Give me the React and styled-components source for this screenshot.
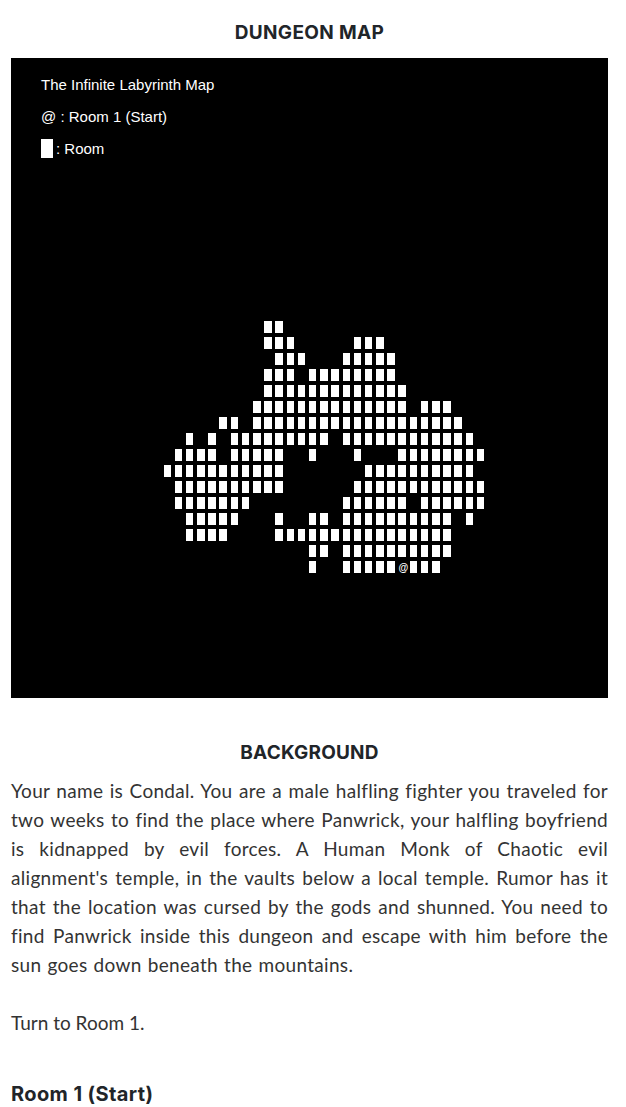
import React from "react"
import styled, { createGlobalStyle } from 'styled-components';

const GlobalStyle = createGlobalStyle`
  html, body {
    margin: 0;
    padding: 0;
    background: #fff;
  }
`

// rooms per row of the map, as [from, to] columns
const MAP_ROWS = [
  [[9, 10]],
  [[9, 11], [17, 19]],
  [[10, 12], [16, 20]],
  [[9, 11], [13, 20]],
  [[9, 21]],
  [[8, 21], [23, 25]],
  [[5, 6], [8, 26]],
  [[2, 2], [4, 4], [6, 14], [16, 27]],
  [[1, 4], [6, 10], [13, 13], [17, 17], [21, 28]],
  [[0, 10], [18, 27]],
  [[1, 10], [17, 28]],
  [[1, 7], [16, 21], [23, 28]],
  [[2, 6], [10, 10], [13, 14], [16, 25], [27, 27]],
  [[2, 5], [10, 25]],
  [[13, 14], [16, 25]],
  [[13, 13], [16, 24]],
]

const COLUMNS = 29
const START = { row: 15, col: 21 }

const Page = styled.div`
  width: 626px;
  height: 1107px;
  overflow: hidden;
  padding: 21px 18px 0 11px;
  box-sizing: border-box;
  color: #212529;
  font-family: Lato, "Open Sans", sans-serif;
`

const Heading = styled.h2`
  margin: 0 0 14px;
  font-family: Inter, "Liberation Sans", sans-serif;
  font-size: 19px;
  line-height: 23px;
  font-weight: 700;
  letter-spacing: 0.35px;
  text-align: center;
`

const MapPanel = styled.div`
  height: 640px;
  background: #000;
  color: #fff;
  font-family: "Liberation Sans", Arial, sans-serif;
  font-size: 15px;
  display: flex;
  flex-direction: column;
  padding: 10px 0 0 30px;
  box-sizing: border-box;
`

const Legend = styled.div`
  display: flex;
  align-items: center;
  height: 32px;
`

const LegendSwatch = styled.span`
  display: inline-block;
  width: 12px;
  height: 19px;
  background: #fff;
  margin-right: 3px;
`

const Grid = styled.div`
  display: grid;
  grid-template-columns: repeat(${COLUMNS}, 11.2px);
  grid-auto-rows: 16px;
  margin: 156px 0 0 122.5px;
`

const Cell = styled.div`
  width: 7.5px;
  height: 12.5px;
  margin: 0.5px 0 0;
  background: ${props => props.$room ? '#fff' : 'transparent'};
`

const StartCell = styled.div`
  width: 11px;
  height: 12.5px;
  margin: 0.5px 0 0 -0.5px;
  color: #fff;
  font-size: 10px;
  font-weight: 700;
  line-height: 13px;
  text-align: center;
`

const SectionTitle = styled.h3`
  margin: 43px 0 12px;
  font-family: Inter, "Liberation Sans", sans-serif;
  font-size: 19px;
  line-height: 23px;
  font-weight: 700;
  letter-spacing: 0.2px;
  text-align: center;
`

const Paragraph = styled.p`
  margin: 0 0 29px;
  font-size: 19px;
  line-height: 29px;
  letter-spacing: ${props => props.$long ? '0.3px' : '0'};
  word-spacing: ${props => props.$long ? '1px' : '0'};
  text-align: justify;
  color: #333;
`

const RoomTitle = styled.h3`
  margin: 46px 0 0;
  font-family: Inter, "Liberation Sans", sans-serif;
  font-size: 20px;
  line-height: 23px;
  font-weight: 700;
  letter-spacing: 0.4px;
`

const isRoom = (row, col) => MAP_ROWS[row].some(([from, to]) => col >= from && col <= to)

const DungeonMap = () => (
  <MapPanel>
    <Legend>The Infinite Labyrinth Map</Legend>
    <Legend>@ : Room 1 (Start)</Legend>
    <Legend><LegendSwatch />: Room</Legend>
    <Grid>
      {
        MAP_ROWS.map((_, row) =>
          Array.from({ length: COLUMNS }, (__, col) =>
            row === START.row && col === START.col
              ? <StartCell key={`room-${row}-${col}`}>@</StartCell>
              : <Cell key={`room-${row}-${col}`} $room={isRoom(row, col)} />
          )
        )
      }
    </Grid>
  </MapPanel>
)

const App = () => (
  <Page>
    <GlobalStyle />
    <Heading>DUNGEON MAP</Heading>
    <DungeonMap />
    <SectionTitle>BACKGROUND</SectionTitle>
    <Paragraph $long>
      Your name is Condal. You are a male halfling fighter you traveled for two weeks to find the place where Panwrick, your halfling boyfriend is kidnapped by evil forces. A Human Monk of Chaotic evil alignment's temple, in the vaults below a local temple. Rumor has it that the location was cursed by the gods and shunned. You need to find Panwrick inside this dungeon and escape with him before the sun goes down beneath the mountains.
    </Paragraph>
    <Paragraph>Turn to Room 1.</Paragraph>
    <RoomTitle>Room 1 (Start)</RoomTitle>
  </Page>
)

export default App
